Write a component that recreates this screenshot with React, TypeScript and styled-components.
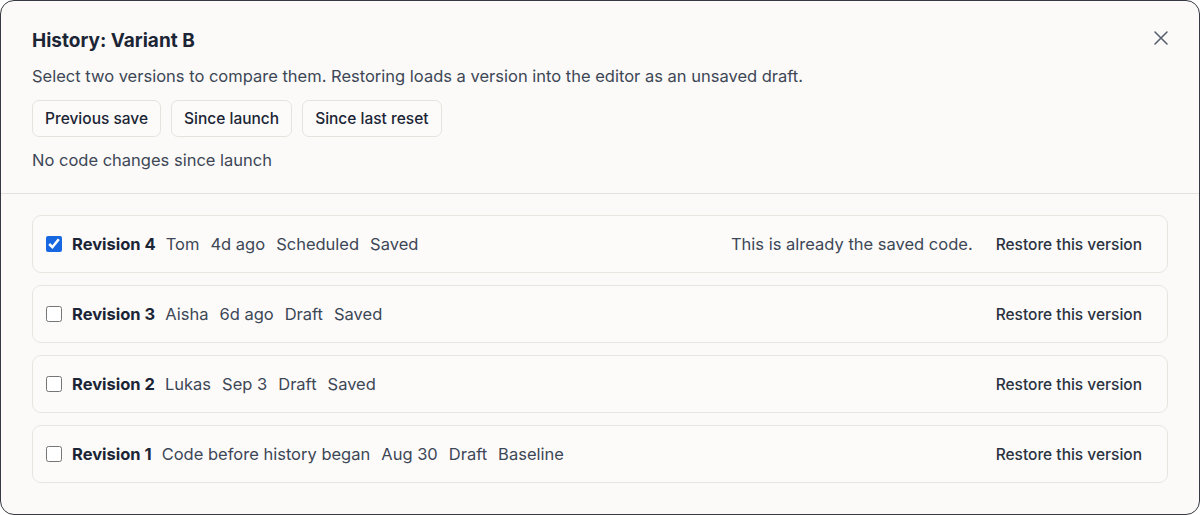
import React, { useState } from 'react';
import styled, { createGlobalStyle } from 'styled-components';

const GlobalStyle = createGlobalStyle`
  html, body {
    margin: 0;
    padding: 0;
    background: #ffffff;
  }
  body {
    font-family: Inter, "Noto Sans", sans-serif;
    -webkit-font-smoothing: antialiased;
  }
`;

const Dialog = styled.div`
  box-sizing: border-box;
  width: 1200px;
  height: 515px;
  border: 1.5px solid #363941;
  border-radius: 14px;
  background: #fbfaf8;
  display: flex;
  flex-direction: column;
  overflow: hidden;
`;

const Header = styled.div`
  position: relative;
  padding: 27px 32px 21px 31px;
  border-bottom: 1px solid #e4e1dc;
`;

const Title = styled.h2`
  margin: 0;
  font-size: 19px;
  line-height: 26px;
  font-weight: 650;
  color: #1b2535;
`;

const Description = styled.p`
  margin: 10px 0 0;
  font-size: 16.5px;
  line-height: 24px;
  color: #3d4756;
`;

const ButtonBar = styled.div`
  display: flex;
  gap: 10px;
  margin-top: 12px;
`;

const CompareButton = styled.button`
  height: 37px;
  padding: 0 12px;
  border: 1px solid #e6e3de;
  border-radius: 7px;
  background: #fcfbf9;
  font-family: inherit;
  font-size: 15.5px;
  font-weight: 500;
  color: #1b2535;
  cursor: pointer;
`;

const Note = styled.p`
  margin: 11px 0 0;
  font-size: 16.5px;
  line-height: 24px;
  color: #3d4756;
`;

const CloseButton = styled.button`
  position: absolute;
  top: 27px;
  right: 28px;
  width: 20px;
  height: 20px;
  padding: 0;
  border: none;
  background: transparent;
  display: flex;
  align-items: center;
  justify-content: center;
  cursor: pointer;
`;

const List = styled.div`
  display: flex;
  flex-direction: column;
  gap: 12px;
  padding: 21px 31px 0 31px;
`;

const Row = styled.div`
  box-sizing: border-box;
  height: 58px;
  display: flex;
  align-items: center;
  padding: 0 25px 0 13px;
  border: 1px solid #e8e5e0;
  border-radius: 9px;
  background: #fcfbfa;
`;

const Check = styled.input`
  width: 16px;
  height: 16px;
  margin: 0 10px 0 0;
  accent-color: #1768e0;
`;

const RevisionName = styled.span`
  font-size: 16.5px;
  font-weight: 650;
  color: #1b2535;
  margin-right: 10px;
`;

const Meta = styled.div`
  display: flex;
  gap: 11px;
  font-size: 16.5px;
  color: #3d4756;
`;

const RowEnd = styled.div`
  margin-left: auto;
  display: flex;
  align-items: center;
  gap: 23px;
`;

const SavedNote = styled.span`
  font-size: 16.5px;
  color: #3d4756;
`;

const RestoreButton = styled.button`
  padding: 0;
  border: none;
  background: transparent;
  font-family: inherit;
  font-size: 15.5px;
  font-weight: 500;
  color: #2a3240;
  cursor: pointer;
`;

type Revision = {
  id: number;
  meta: string[];
  note?: string;
};

const revisions: Revision[] = [
  { id: 4, meta: ['Tom', '4d ago', 'Scheduled', 'Saved'], note: 'This is already the saved code.' },
  { id: 3, meta: ['Aisha', '6d ago', 'Draft', 'Saved'] },
  { id: 2, meta: ['Lukas', 'Sep 3', 'Draft', 'Saved'] },
  { id: 1, meta: ['Code before history began', 'Aug 30', 'Draft', 'Baseline'] },
];

const CloseIcon = () => (
  <svg width="16" height="16" viewBox="0 0 16 16" fill="none">
    <path d="M2 2L14 14M14 2L2 14" stroke="#596070" strokeWidth="1.6" strokeLinecap="round" />
  </svg>
);

const App = () => {
  const [selected, setSelected] = useState<number[]>([4]);

  const toggle = (id: number) =>
    setSelected((s) => (s.includes(id) ? s.filter((x) => x !== id) : [...s, id]));

  return (
    <>
      <GlobalStyle />
      <Dialog>
        <Header>
          <Title>History: Variant B</Title>
          <Description>
            Select two versions to compare them. Restoring loads a version into the editor as an unsaved draft.
          </Description>
          <ButtonBar>
            <CompareButton>Previous save</CompareButton>
            <CompareButton>Since launch</CompareButton>
            <CompareButton>Since last reset</CompareButton>
          </ButtonBar>
          <Note>No code changes since launch</Note>
          <CloseButton aria-label="Close">
            <CloseIcon />
          </CloseButton>
        </Header>
        <List>
          {revisions.map((r) => (
            <Row key={r.id}>
              <Check
                type="checkbox"
                checked={selected.includes(r.id)}
                onChange={() => toggle(r.id)}
              />
              <RevisionName>Revision {r.id}</RevisionName>
              <Meta>
                {r.meta.map((m) => (
                  <span key={m}>{m}</span>
                ))}
              </Meta>
              <RowEnd>
                {r.note && <SavedNote>{r.note}</SavedNote>}
                <RestoreButton>Restore this version</RestoreButton>
              </RowEnd>
            </Row>
          ))}
        </List>
      </Dialog>
    </>
  );
};

export default App;
